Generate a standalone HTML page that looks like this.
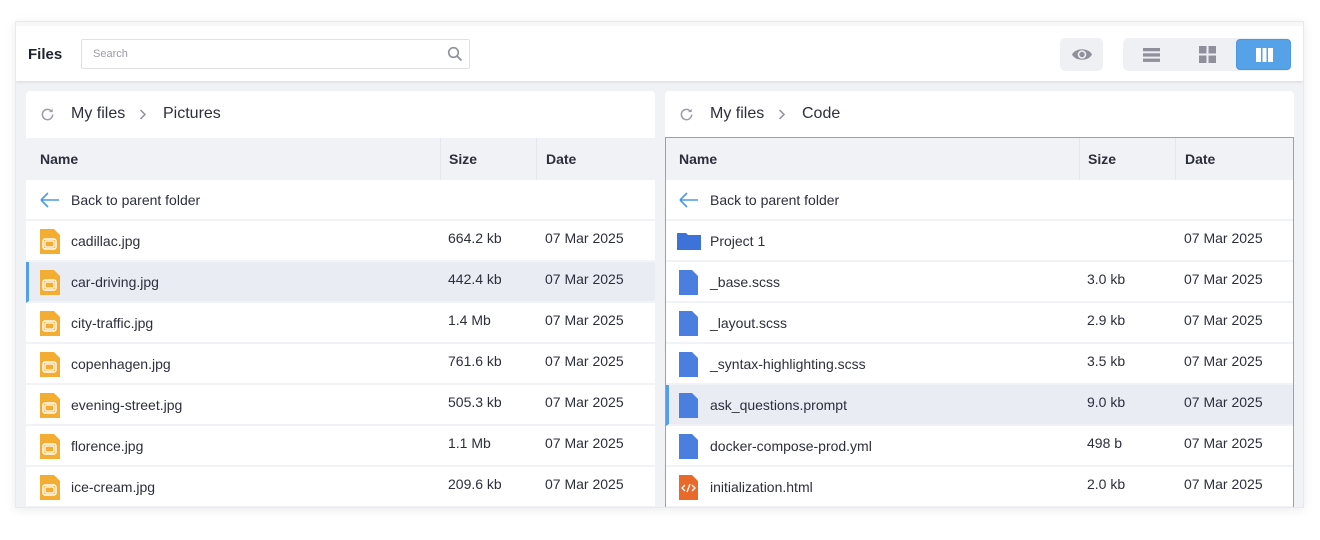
<!DOCTYPE html>
<html><head><style>
*{box-sizing:border-box;margin:0;padding:0}
body{width:1320px;height:540px;background:#fff;font-family:"Liberation Sans",sans-serif;color:#2c2f3c;position:relative;overflow:hidden}
.outer{position:absolute;left:15px;top:21px;width:1289px;height:487px;background:#f1f2f6;border:1px solid #e8e9ee;box-shadow:0 2px 10px rgba(0,0,0,.08);overflow:hidden}
.top{position:absolute;left:0;top:0;width:100%;height:59px;background:#fff;border-top:4px solid #f7f7f9;box-shadow:0 1px 3px rgba(0,0,0,.1)}
.title{position:absolute;left:12px;top:20px;font-size:15px;font-weight:bold;color:#1f2230}
.search{position:absolute;left:65px;top:13px;width:389px;height:30px;border:1px solid #e0e1e6;border-radius:2px;font-size:11px;color:#9a9ca8;padding:8px 11px}
.eye{position:absolute;left:1044px;top:12px;width:43px;height:33px;background:#eff0f4;border-radius:5px}
.seg{position:absolute;left:1107px;top:12px;width:168px;height:33px;background:#eff0f4;border-radius:5px}
.act{position:absolute;left:113px;top:1px;width:55px;height:31px;background:#56a2e8;border-radius:4px;border:1px solid #4d97de}
.panel{position:absolute;top:69px;width:629px;height:420px;background:#fff;border-radius:4px 4px 0 0;overflow:hidden}
.crumb{height:47px;position:relative;font-size:16px;color:#2c2f3c}
.crumb span{position:absolute;top:14px}
.tbl{position:absolute;top:47px;left:0;width:100%;bottom:0}
.blue{border:1px solid #6aaee9;border-bottom:none;top:46px}
.row{height:41px;border-bottom:2px solid #f2f3f6;position:relative;font-size:14px}
.hd{background:#f1f2f6;font-weight:bold;border-bottom:none;height:42px}
.hd div{position:absolute;top:0;height:42px;line-height:42px}
.sel{background:#e9ecf3;border-left:3px solid #53a0e6}
.n{position:absolute;left:45px;top:12px}
.s{position:absolute;left:422px;top:9px}
.d{position:absolute;left:519px;top:9px}
.ic{position:absolute;left:14px;top:8px}
</style></head><body>
<div class="outer">
 <div class="top">
  <div class="title">Files</div>
  <div class="search">Search
   <svg style="position:absolute;right:6px;top:6px" width="16" height="16" viewBox="0 0 16 16"><circle cx="6.5" cy="6.5" r="4.8" fill="none" stroke="#8d8f9a" stroke-width="1.6"/><path d="M10 10l4.5 4.5" stroke="#8d8f9a" stroke-width="1.8"/></svg></div>
  <div class="eye"><svg style="position:absolute;left:11px;top:9px" width="22" height="15" viewBox="0 0 22 15"><path d="M1 7.5C4.5 0.5 17.5 0.5 21 7.5 17.5 14.5 4.5 14.5 1 7.5Z" fill="#8f909b"/><circle cx="11" cy="7.5" r="4.3" fill="#eff0f4"/><circle cx="11" cy="7.5" r="2.7" fill="#8f909b"/></svg></div>
  <div class="seg">
   <svg style="position:absolute;left:20px;top:10px" width="17" height="14"><rect y="0" width="17" height="3.3" fill="#8f909b"/><rect y="5.3" width="17" height="3.3" fill="#8f909b"/><rect y="10.6" width="17" height="3.3" fill="#8f909b"/></svg>
   <svg style="position:absolute;left:76px;top:8px" width="17" height="17"><rect width="7.5" height="7.5" fill="#8f909b"/><rect x="9.5" width="7.5" height="7.5" fill="#8f909b"/><rect y="9.5" width="7.5" height="7.5" fill="#8f909b"/><rect x="9.5" y="9.5" width="7.5" height="7.5" fill="#8f909b"/></svg>
   <div class="act"><svg style="position:absolute;left:19px;top:8px" width="17" height="14"><rect width="17" height="14" fill="#fff"/><rect x="5" width="1.5" height="14" fill="#56a2e8"/><rect x="10.5" width="1.5" height="14" fill="#56a2e8"/></svg></div>
  </div>
 </div>
 <div class="panel" style="left:10px">
  <div class="crumb"><svg style="position:absolute;left:14px;top:16px" width="15" height="15" viewBox="0 0 16 16"><path d="M13.5 8A5.5 5.5 0 1 1 11.5 3.8" fill="none" stroke="#9a9ca6" stroke-width="1.6"/><path d="M9.5 2.5h4v-3.5z" fill="#9a9ca6" transform="translate(0,3)"/></svg><span style="left:45px">My files</span><svg style="position:absolute;left:113px;top:18px" width="8" height="11"><path d="M1.5 1l4.5 4.5-4.5 4.5" stroke="#8f919b" stroke-width="1.5" fill="none"/></svg><span style="left:137px">Pictures</span></div>
  <div class="tbl">
   <div class="row hd"><div style="left:14px">Name</div><div style="left:414px;border-left:1px solid #e6e7ec;padding-left:8px">Size</div><div style="left:510px;border-left:1px solid #e6e7ec;padding-left:9px">Date</div></div>
   <div class="row"><svg class="ic" style="top:12px" width="20" height="16"><path d="M1 8h18M1 8l7-7M1 8l7 7" stroke="#4a9be6" stroke-width="1.6" fill="none"/></svg><span class="n">Back to parent folder</span></div>
   <div class="row"><svg class="ic" width="20" height="25"><path d="M0 0h14l6 6v19H0z" fill="#f4ad33"/><rect x="3" y="10" width="13" height="10" rx="2" fill="none" stroke="#fff" stroke-width="1.4"/><rect x="5" y="12" width="9" height="6" rx="1" fill="none" stroke="#fff" stroke-width="1.2"/></svg><span class="n">cadillac.jpg</span><span class="s">664.2 kb</span><span class="d">07 Mar 2025</span></div>
   <div class="row sel"><svg class="ic" style="left:11px" width="20" height="25"><path d="M0 0h14l6 6v19H0z" fill="#f4ad33"/><rect x="3" y="10" width="13" height="10" rx="2" fill="none" stroke="#fff" stroke-width="1.4"/><rect x="5" y="12" width="9" height="6" rx="1" fill="none" stroke="#fff" stroke-width="1.2"/></svg><span class="n" style="left:42px">car-driving.jpg</span><span class="s" style="left:419px">442.4 kb</span><span class="d" style="left:516px">07 Mar 2025</span></div>
   <div class="row"><svg class="ic" width="20" height="25"><path d="M0 0h14l6 6v19H0z" fill="#f4ad33"/><rect x="3" y="10" width="13" height="10" rx="2" fill="none" stroke="#fff" stroke-width="1.4"/><rect x="5" y="12" width="9" height="6" rx="1" fill="none" stroke="#fff" stroke-width="1.2"/></svg><span class="n">city-traffic.jpg</span><span class="s">1.4 Mb</span><span class="d">07 Mar 2025</span></div>
   <div class="row"><svg class="ic" width="20" height="25"><path d="M0 0h14l6 6v19H0z" fill="#f4ad33"/><rect x="3" y="10" width="13" height="10" rx="2" fill="none" stroke="#fff" stroke-width="1.4"/><rect x="5" y="12" width="9" height="6" rx="1" fill="none" stroke="#fff" stroke-width="1.2"/></svg><span class="n">copenhagen.jpg</span><span class="s">761.6 kb</span><span class="d">07 Mar 2025</span></div>
   <div class="row"><svg class="ic" width="20" height="25"><path d="M0 0h14l6 6v19H0z" fill="#f4ad33"/><rect x="3" y="10" width="13" height="10" rx="2" fill="none" stroke="#fff" stroke-width="1.4"/><rect x="5" y="12" width="9" height="6" rx="1" fill="none" stroke="#fff" stroke-width="1.2"/></svg><span class="n">evening-street.jpg</span><span class="s">505.3 kb</span><span class="d">07 Mar 2025</span></div>
   <div class="row"><svg class="ic" width="20" height="25"><path d="M0 0h14l6 6v19H0z" fill="#f4ad33"/><rect x="3" y="10" width="13" height="10" rx="2" fill="none" stroke="#fff" stroke-width="1.4"/><rect x="5" y="12" width="9" height="6" rx="1" fill="none" stroke="#fff" stroke-width="1.2"/></svg><span class="n">florence.jpg</span><span class="s">1.1 Mb</span><span class="d">07 Mar 2025</span></div>
   <div class="row"><svg class="ic" width="20" height="25"><path d="M0 0h14l6 6v19H0z" fill="#f4ad33"/><rect x="3" y="10" width="13" height="10" rx="2" fill="none" stroke="#fff" stroke-width="1.4"/><rect x="5" y="12" width="9" height="6" rx="1" fill="none" stroke="#fff" stroke-width="1.2"/></svg><span class="n">ice-cream.jpg</span><span class="s">209.6 kb</span><span class="d">07 Mar 2025</span></div>
  </div>
 </div>
 <div class="panel" style="left:649px">
  <div class="crumb"><svg style="position:absolute;left:14px;top:16px" width="15" height="15" viewBox="0 0 16 16"><path d="M13.5 8A5.5 5.5 0 1 1 11.5 3.8" fill="none" stroke="#9a9ca6" stroke-width="1.6"/><path d="M9.5 2.5h4v-3.5z" fill="#9a9ca6" transform="translate(0,3)"/></svg><span style="left:45px">My files</span><svg style="position:absolute;left:113px;top:18px" width="8" height="11"><path d="M1.5 1l4.5 4.5-4.5 4.5" stroke="#8f919b" stroke-width="1.5" fill="none"/></svg><span style="left:137px">Code</span></div>
  <div class="tbl blue">
   <div class="row hd"><div style="left:13px">Name</div><div style="left:413px;border-left:1px solid #e6e7ec;padding-left:8px">Size</div><div style="left:509px;border-left:1px solid #e6e7ec;padding-left:9px">Date</div></div>
   <div class="row"><svg class="ic" style="top:12px;left:13px" width="20" height="16"><path d="M1 8h18M1 8l7-7M1 8l7 7" stroke="#4a9be6" stroke-width="1.6" fill="none"/></svg><span class="n" style="left:44px">Back to parent folder</span></div>
   <div class="row"><svg class="ic" style="left:11px;top:12px" width="24" height="17"><path d="M0 0h9l2 2h13v15H0z" fill="#3d73d9"/></svg><span class="n" style="left:44px">Project 1</span><span class="d" style="left:518px">07 Mar 2025</span></div>
   <div class="row"><svg class="ic" style="left:13px" width="19" height="25"><path d="M0 0h13l6 6v19H0z" fill="#4a7fe0"/></svg><span class="n" style="left:44px">_base.scss</span><span class="s" style="left:421px">3.0 kb</span><span class="d" style="left:518px">07 Mar 2025</span></div>
   <div class="row"><svg class="ic" style="left:13px" width="19" height="25"><path d="M0 0h13l6 6v19H0z" fill="#4a7fe0"/></svg><span class="n" style="left:44px">_layout.scss</span><span class="s" style="left:421px">2.9 kb</span><span class="d" style="left:518px">07 Mar 2025</span></div>
   <div class="row"><svg class="ic" style="left:13px" width="19" height="25"><path d="M0 0h13l6 6v19H0z" fill="#4a7fe0"/></svg><span class="n" style="left:44px">_syntax-highlighting.scss</span><span class="s" style="left:421px">3.5 kb</span><span class="d" style="left:518px">07 Mar 2025</span></div>
   <div class="row sel"><svg class="ic" style="left:10px" width="19" height="25"><path d="M0 0h13l6 6v19H0z" fill="#4a7fe0"/></svg><span class="n" style="left:41px">ask_questions.prompt</span><span class="s" style="left:418px">9.0 kb</span><span class="d" style="left:515px">07 Mar 2025</span></div>
   <div class="row"><svg class="ic" style="left:13px" width="19" height="25"><path d="M0 0h13l6 6v19H0z" fill="#4a7fe0"/></svg><span class="n" style="left:44px">docker-compose-prod.yml</span><span class="s" style="left:421px">498 b</span><span class="d" style="left:518px">07 Mar 2025</span></div>
   <div class="row"><svg class="ic" style="left:13px" width="19" height="25"><path d="M0 0h13l6 6v19H0z" fill="#e8692a"/><path d="M6 10l-3 3 3 3M13 10l3 3-3 3M11 9l-3 8" stroke="#fff" stroke-width="1.3" fill="none"/></svg><span class="n" style="left:44px">initialization.html</span><span class="s" style="left:421px">2.0 kb</span><span class="d" style="left:518px">07 Mar 2025</span></div>
  </div>
 </div>
</div>
</body></html>
